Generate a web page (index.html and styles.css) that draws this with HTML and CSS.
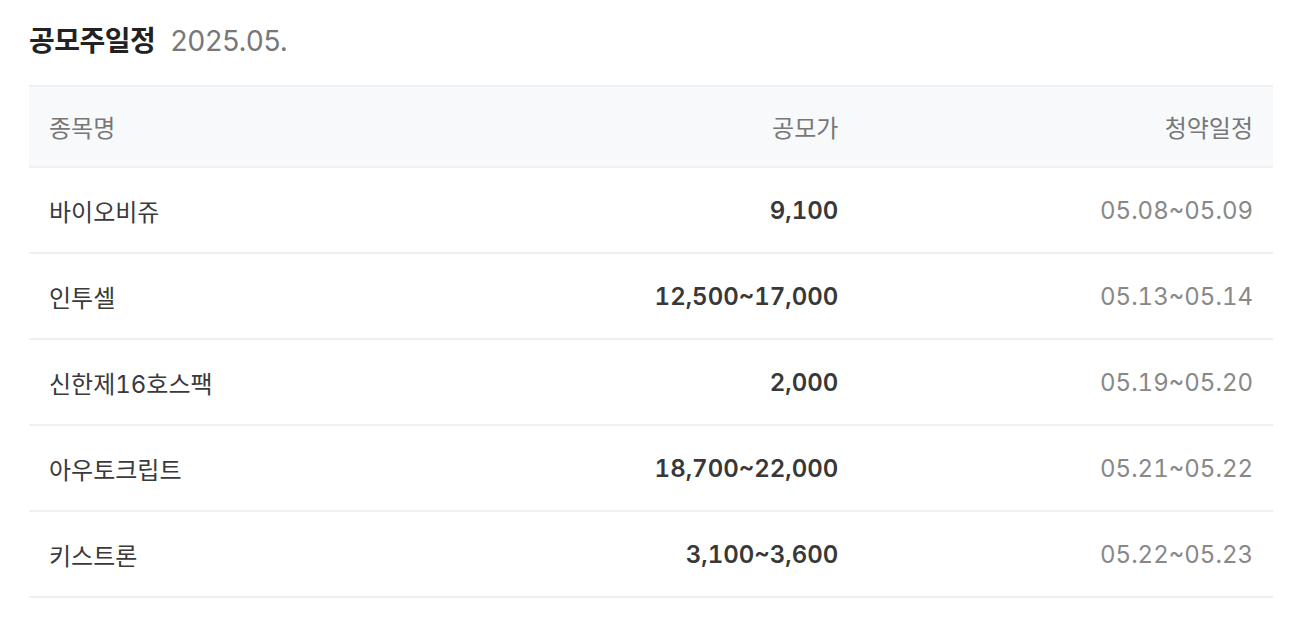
FILE: index.html
```html
<!DOCTYPE html>
<html lang="ko">
<head>
  <meta charset="UTF-8"/>
  <meta name="viewport" content="width=device-width,initial-scale=1.0"/>
  <title>공모주일정</title>
  <link rel="stylesheet" href="styles.css">
</head>
<body>
  <main class="ipo">
    <h2 class="ipo-title">공모주일정 <span class="ipo-month">2025.05.</span></h2>

    <table class="ipo-table">
      <thead>
        <tr>
          <th class="name">종목명</th>
          <th class="price">공모가</th>
          <th class="date">청약일정</th>
        </tr>
      </thead>
      <tbody>
        <tr>
          <td class="name">바이오비쥬</td>
          <td class="price">9,100</td>
          <td class="date">05.08~05.09</td>
        </tr>
        <tr>
          <td class="name">인투셀</td>
          <td class="price">12,500~17,000</td>
          <td class="date">05.13~05.14</td>
        </tr>
        <tr>
          <td class="name">신한제16호스팩</td>
          <td class="price">2,000</td>
          <td class="date">05.19~05.20</td>
        </tr>
        <tr>
          <td class="name">아우토크립트</td>
          <td class="price">18,700~22,000</td>
          <td class="date">05.21~05.22</td>
        </tr>
        <tr>
          <td class="name">키스트론</td>
          <td class="price">3,100~3,600</td>
          <td class="date">05.22~05.23</td>
        </tr>
      </tbody>
    </table>
  </main>
</body>
</html>
```

FILE: styles.css
```css
:root {
  --text: #333; --muted: #777; --date: #888;
  --line: #eef0f3; --head: #f8f9fb;
}
* { box-sizing:border-box; margin:0; padding:0; }
body {
  background:#fff; color:var(--text);
  font-family: Inter, "Noto Sans CJK KR", sans-serif;
}
.ipo {
  padding:22px 23px 0 29px;
}
.ipo-title {
  font-size:28px; font-weight:700; color:#222;
  line-height:38px; letter-spacing:-0.5px;
  margin-bottom:25px;
}
.ipo-month {
  font-weight:400; color:#777; margin-left:9px; letter-spacing:0;
}
.ipo-table {
  width:100%; border-collapse:collapse; table-layout:fixed;
  font-size:24px; font-variant-numeric:tabular-nums;
}
.ipo-table th, .ipo-table td {
  height:86px; padding:0 20px;
  border-top:2px solid var(--line);
  border-bottom:2px solid var(--line);
  vertical-align:middle;
}
.ipo-table th {
  background:var(--head); color:var(--muted);
  font-weight:400; height:81px;
}
.ipo-table .name { text-align:left; }
.ipo-table .price { text-align:right; }
.ipo-table .date { text-align:right; }
.ipo-table td.name { color:#3a3a3a; }
.ipo-table td.price { font-weight:600; color:#383838; }
.ipo-table td.date { color:var(--date); }
```
